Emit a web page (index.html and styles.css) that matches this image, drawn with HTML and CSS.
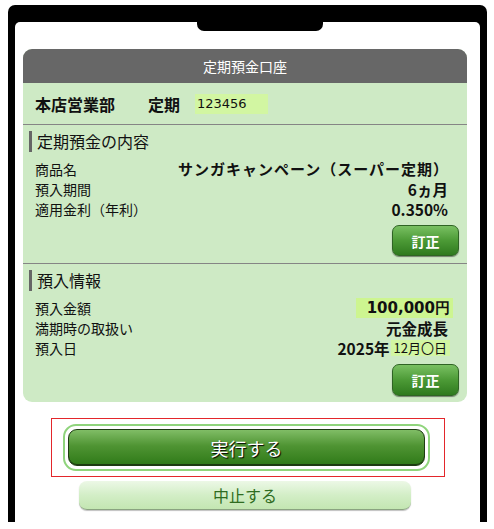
FILE: index.html
```html
<!DOCTYPE html>
<html lang="ja">
<head>
<meta charset="utf-8">
<title>定期預金口座</title>
<link rel="stylesheet" href="styles.css">
</head>
<body>
<div class="phone">
  <div class="screen">
    <div class="notch"></div>
    <div class="card">
      <div class="card-head">定期預金口座</div>
      <div class="acct">
        <span class="branch">本店営業部</span>
        <span class="kind">定期</span>
        <span class="num">123456</span>
      </div>
      <div class="section">
        <div class="sec-title">定期預金の内容</div>
        <div class="rows">
          <div class="row"><span class="lbl">商品名</span><span class="val big">サンガキャンペーン（スーパー定期）</span></div>
          <div class="row"><span class="lbl">預入期間</span><span class="val">6ヵ月</span></div>
          <div class="row"><span class="lbl">適用金利（年利）</span><span class="val">0.350%</span></div>
        </div>
        <div class="btn-line"><button class="fix">訂正</button></div>
      </div>
      <div class="section last">
        <div class="sec-title">預入情報</div>
        <div class="rows">
          <div class="row"><span class="lbl">預入金額</span><span class="val amount">100,000円</span></div>
          <div class="row"><span class="lbl">満期時の取扱い</span><span class="val">元金成長</span></div>
          <div class="row"><span class="lbl">預入日</span><span class="val">2025年<span class="date">12月〇日</span></span></div>
        </div>
        <div class="btn-line"><button class="fix">訂正</button></div>
      </div>
    </div>
    <div class="exec-box">
      <div class="ring"><button class="exec">実行する</button></div>
    </div>
    <button class="cancel">中止する</button>
  </div>
</div>
</body>
</html>
```
FILE: styles.css
```css
* { box-sizing: border-box; }
html, body { margin: 0; padding: 0; background: #fff; }
body {
  font-family: "Noto Sans CJK JP", "Noto Sans", sans-serif;
  color: #111;
  width: 494px;
  height: 529px;
  overflow: hidden;
}
.phone {
  margin: 5px 0 0 8px;
  width: 479px;
  padding: 17px 7px 0;
  background: #000;
  border-radius: 7px 7px 0 0;
}
.screen {
  background: #fff;
  height: 500px;
  border-radius: 5px 5px 0 0;
  overflow: hidden;
}
.notch {
  margin-left: 182px;
  width: 126px;
  height: 9px;
  background: #000;
  border-radius: 0 0 7px 7px;
}
.card {
  margin: 18px 13px 0 8px;
  background: #ceeac5;
  border-radius: 9px;
  overflow: hidden;
}
.card-head {
  height: 34px;
  background: #676767;
  color: #fff;
  font-size: 14px;
  line-height: 34px;
  text-align: center;
}
.acct {
  height: 42px;
  display: flex;
  align-items: center;
  padding-left: 12px;
  border-bottom: 1px solid #858585;
  line-height: 20px;
}
.branch { font-size: 16px; font-weight: bold; width: 113px; }
.kind { font-size: 16px; font-weight: bold; width: 47px; }
.num {
  font-family: "DejaVu Sans", sans-serif;
  font-size: 13px;
  background: #d2f6a2;
  width: 73px;
  height: 20px;
  line-height: 20px;
  padding-left: 2px;
}
.section {
  padding: 6px 8px 7px 6px;
  border-bottom: 1px solid #858585;
}
.section.last { border-bottom: 0; padding-bottom: 6px; }
.sec-title {
  height: 21px;
  line-height: 21px;
  font-size: 16px;
  border-left: 3px solid #666;
  padding-left: 5px;
}
.rows {
  margin-top: 7px;
  padding: 0 11px 0 6px;
}
.row {
  display: flex;
  justify-content: space-between;
  align-items: center;
  height: 20px;
  line-height: 20px;
}
.lbl { font-size: 14px; line-height: 20px; }
.val {
  font-size: 15.5px;
  font-weight: bold;
  display: flex;
  align-items: center;
  line-height: 20px;
  height: 20px;
}
.val.big { font-size: 15px; letter-spacing: 1px; margin-right: -1px; }
.amount {
  font-family: "DejaVu Sans", sans-serif;
  font-size: 15px;
  background: #cdf590;
  padding: 0 3px 0 11px;
  margin-right: -5px;
}
.date {
  font-weight: normal;
  font-size: 13px;
  background: #d2f6a2;
  height: 16px;
  line-height: 16px;
  padding: 0 3px;
  margin-left: 1px;
  margin-right: -2px;
}
.btn-line {
  display: flex;
  justify-content: flex-end;
  margin-top: 6px;
}
.fix {
  width: 67px;
  height: 31px;
  border: 1px solid #2f6424;
  border-radius: 7px;
  background: linear-gradient(#79c062, #4c9a36 50%, #2f7a1e);
  box-shadow: 0 1px 1px rgba(0,0,0,0.45);
  color: #fff;
  font-family: "Noto Sans CJK JP", sans-serif;
  font-size: 14px;
  font-weight: bold;
  padding: 0;
}
.section.last .fix { height: 32px; }
.exec-box {
  margin: 16px 0 0 36px;
  width: 394px;
  height: 59px;
  border: 1px solid #e3262b;
  padding: 5px 0 0 11px;
}
.ring {
  width: 367px;
  height: 47px;
  border: 2px solid #8fd47c;
  border-radius: 13px;
  padding: 3px;
  background: #fff;
}
.exec {
  display: block;
  width: 100%;
  height: 100%;
  border: 1px solid #1e3c12;
  border-radius: 9px;
  background: linear-gradient(#80bd66, #4f9433 45%, #2f7a18);
  color: #fff;
  font-family: "Noto Sans CJK JP", sans-serif;
  font-size: 18px;
  text-shadow: 1px 1px 1px #000;
  padding: 0;
  box-shadow: inset 0 -1px 0 #1c3a10;
}
.cancel {
  display: block;
  margin: 4px 0 0 64px;
  width: 332px;
  height: 29px;
  border: 0;
  border-bottom: 1px solid #8aa380;
  border-radius: 8px;
  background: linear-gradient(#ecf8e6, #d3eec7 50%, #c3e6b2);
  box-shadow: 0 1px 1px rgba(0,0,0,0.25);
  color: #2f6c21;
  font-family: "Noto Sans CJK JP", sans-serif;
  font-size: 16px;
  padding: 0;
}
```
